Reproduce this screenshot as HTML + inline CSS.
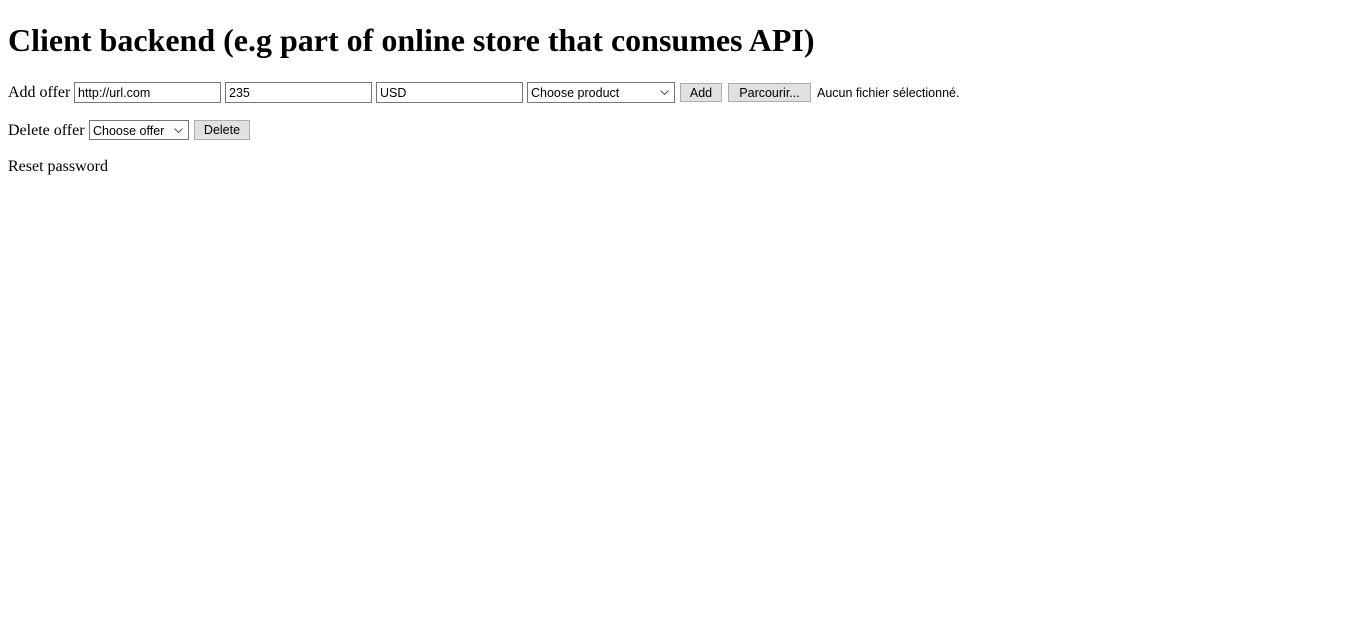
<!DOCTYPE html>
<html><head><style>
body{margin:0;background:#fff;font-family:"Liberation Serif",serif;font-size:16px;color:#000}
.a{position:absolute;white-space:nowrap}
h1{position:absolute;left:8px;top:22px;margin:0;font-size:32px;line-height:37px;font-weight:bold}
.in{position:absolute;box-sizing:border-box;border:1px solid #767676;background:#fff;font-family:"Liberation Sans",sans-serif;font-size:12.5px;line-height:20px;padding-left:3px;height:21px}
.btn{position:absolute;box-sizing:border-box;border:1px solid #adadad;background:#e1e1e1;font-family:"Liberation Sans",sans-serif;font-size:12.5px;text-align:center;line-height:18px}
.sel svg{position:absolute;right:5px;top:7px}
.sm{font-family:"Liberation Sans",sans-serif;font-size:12.5px}
</style></head><body>
<h1>Client backend (e.g part of online store that consumes API)</h1>
<div class="a" style="left:8px;top:83px;line-height:20px">Add offer</div>
<div class="in" style="left:74px;top:82px;width:147px">http://url.com</div>
<div class="in" style="left:225px;top:82px;width:147px">235</div>
<div class="in" style="left:376px;top:82px;width:147px">USD</div>
<div class="in sel" style="left:527px;top:82px;width:148px">Choose product<svg width="9" height="6"><path d="M0.5 0.5L4.5 4.5L8.5 0.5" stroke="#555" fill="none"/></svg></div>
<div class="btn" style="left:680px;top:83px;width:42px;height:19px">Add</div>
<div class="btn" style="left:728px;top:83px;width:83px;height:19px">Parcourir...</div>
<div class="a sm" style="left:817px;top:86px;line-height:15px">Aucun fichier sélectionné.</div>
<div class="a" style="left:8px;top:121px;line-height:20px">Delete offer</div>
<div class="in sel" style="left:89px;top:120px;width:100px;height:20px;line-height:20px">Choose offer<svg width="9" height="6"><path d="M0.5 0.5L4.5 4.5L8.5 0.5" stroke="#555" fill="none"/></svg></div>
<div class="btn" style="left:194px;top:120px;width:56px;height:20px;line-height:19px">Delete</div>
<div class="a" style="left:8px;top:157px;line-height:20px">Reset password</div>
</body></html>
